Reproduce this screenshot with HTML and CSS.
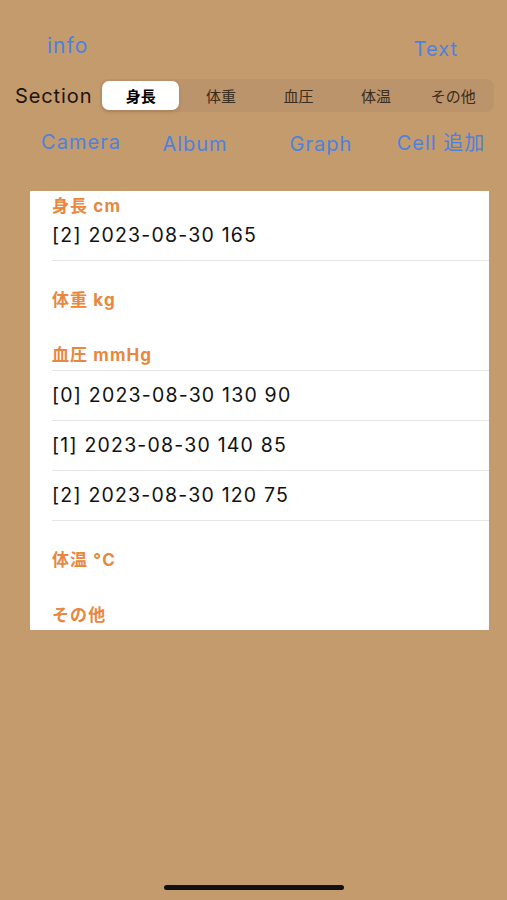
FILE: index.html
```html
<!DOCTYPE html>
<html lang="ja">
<head>
    <meta charset="UTF-8">
    <meta name="viewport" content="width=device-width, initial-scale=1.0">
    <title>Health Record</title>
    <link rel="stylesheet" href="styles.css">
</head>
<body>
    <div class="top-bar">
        <a class="link info">info</a>
        <a class="link text-btn">Text</a>
    </div>

    <div class="section-row">
        <span class="section-label">Section</span>
        <div class="segmented">
            <div class="segment selected">身長</div>
            <div class="segment">体重</div>
            <div class="segment">血圧</div>
            <div class="segment">体温</div>
            <div class="segment">その他</div>
        </div>
    </div>

    <div class="actions">
        <a class="link">Camera</a>
        <a class="link low">Album</a>
        <a class="link low">Graph</a>
        <a class="link mid">Cell 追加</a>
    </div>

    <div class="card">
        <div class="group">
            <div class="group-header first">身長 cm</div>
            <div class="cell">[2] 2023-08-30 165</div>
        </div>
        <div class="group">
            <div class="group-header">体重 kg</div>
        </div>
        <div class="group">
            <div class="group-header lined">血圧 mmHg</div>
            <div class="cell">[0] 2023-08-30 130 90</div>
            <div class="cell">[1] 2023-08-30 140 85</div>
            <div class="cell">[2] 2023-08-30 120 75</div>
        </div>
        <div class="group">
            <div class="group-header">体温 °C</div>
        </div>
        <div class="group">
            <div class="group-header">その他</div>
        </div>
    </div>

    <div class="home-indicator"></div>
</body>
</html>
```

FILE: styles.css
```css
body {
    font-family: 'Inter', 'Noto Sans CJK JP', sans-serif;
    background-color: #c49b6d;
    margin: 0;
    height: 900px;
    position: relative;
    overflow: hidden;
}
.link {
    color: #4c82df;
    font-size: 20px;
    line-height: 26px;
    letter-spacing: 1px;
    cursor: pointer;
}
.top-bar {
    display: flex;
    justify-content: space-between;
    align-items: flex-start;
    padding: 33px 49px 0 47px;
    height: 26px;
}
.top-bar .info {
    font-size: 21px;
}
.top-bar .text-btn {
    margin-top: 3px;
}
.section-row {
    display: flex;
    align-items: center;
    margin: 20px 13px 0 15px;
    height: 33px;
}
.section-label {
    font-size: 20px;
    letter-spacing: 0.9px;
    color: #1a140e;
}
.segmented {
    margin-left: auto;
    width: 390px;
    height: 29px;
    padding: 2px;
    display: flex;
    background-color: #bb946b;
    border-radius: 8px;
}
.segment {
    flex: 1;
    display: flex;
    justify-content: center;
    align-items: center;
    font-size: 15px;
    color: #3b2c1c;
}
.segment.selected {
    background-color: white;
    border-radius: 7px;
    color: #000;
    font-weight: bold;
    margin: 0 3px 0 0;
    box-shadow: 0 2px 4px rgba(0, 0, 0, 0.12);
}
.actions {
    display: grid;
    grid-template-columns: 122px 106px 146px 94px;
    justify-items: center;
    margin: 17px 0 0 20px;
    height: 26px;
}
.actions .low {
    margin-top: 2px;
}
.actions .mid {
    margin-top: 1px;
}
.card {
    background-color: white;
    margin: 36px 18px 0 30px;
    height: 439px;
    overflow: hidden;
}
.group + .group {
    margin-top: 23px;
}
.group-header {
    height: 32px;
    line-height: 32px;
    padding-left: 22px;
    color: #e8873d;
    font-size: 17px;
    letter-spacing: 1.1px;
    font-weight: bold;
}
.group-header.first {
    height: 20px;
    line-height: 30px;
}
.group-header.lined {
    height: 31px;
    border-bottom: 1px solid #e6e6e9;
    margin-left: 22px;
    padding-left: 0;
}
.cell {
    margin-left: 22px;
    height: 49px;
    line-height: 49px;
    border-bottom: 1px solid #e6e6e9;
    font-size: 19.5px;
    letter-spacing: 1.2px;
    color: #111;
}
.home-indicator {
    position: absolute;
    left: 164px;
    bottom: 10px;
    width: 180px;
    height: 5px;
    border-radius: 3px;
    background-color: #111;
}
```
